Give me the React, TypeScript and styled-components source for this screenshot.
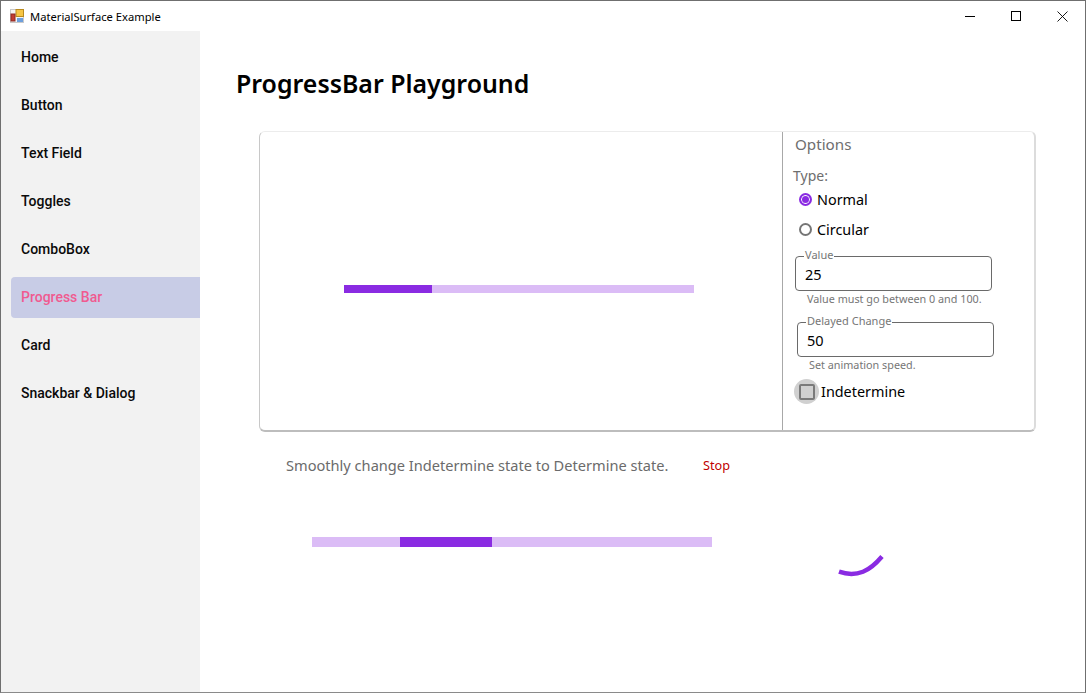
import React from 'react';
import styled, { createGlobalStyle } from 'styled-components';

const Global = createGlobalStyle`
  html, body { margin: 0; padding: 0; background: #fff; }
  body { width: 1086px; height: 693px; overflow: hidden; font-family: "Noto Sans", "Open Sans", sans-serif; }
`;

const Win = styled.div`
  width: 1086px;
  height: 693px;
  box-sizing: border-box;
  border: 1px solid #6f6f6f;
  border-bottom-color: #8a8a8a;
  display: flex;
  flex-direction: column;
  background: #fff;
  overflow: hidden;
`;

const TitleBar = styled.div`
  height: 30px;
  flex: none;
  display: flex;
  align-items: center;
  padding-left: 9px;
  gap: 6px;
  color: #000;
`;

const TitleText = styled.span`
  flex: 1;
  font-size: 11.2px;
`;

const Controls = styled.div`
  display: flex;
  align-self: flex-start;
  margin-top: 8px;
`;

const Control = styled.div`
  width: 46px;
  height: 14px;
  display: flex;
  align-items: center;
  justify-content: center;
`;

const Body = styled.div`
  flex: 1;
  display: flex;
  min-height: 0;
`;

const Sidebar = styled.nav`
  width: 199px;
  flex: none;
  background: #f2f2f2;
  padding: 6px 0 0 10px;
  box-sizing: border-box;
  display: flex;
  flex-direction: column;
  gap: 7px;
`;

const NavItem = styled.div<{ $active?: boolean }>`
  height: 41px;
  box-sizing: border-box;
  display: flex;
  align-items: center;
  padding: 0 0 2px 10px;
  font-family: Roboto, sans-serif;
  font-weight: 500;
  font-size: 14px;
  color: ${(p) => (p.$active ? '#f05a90' : '#0a0a0a')};
  background: ${(p) => (p.$active ? '#c8cce6' : 'transparent')};
  border-radius: 4px 0 0 4px;
`;

const Main = styled.main`
  flex: 1;
  padding: 33px 0 0 36px;
  min-width: 0;
`;

const Heading = styled.h1`
  margin: 0;
  font-size: 24.9px;
  line-height: 38px;
  font-weight: 600;
  color: #000;
`;

const Card = styled.section`
  margin: 29px 0 0 23px;
  width: 777px;
  height: 301px;
  box-sizing: border-box;
  background: #fff;
  border-radius: 6px;
  border: 1px solid #ececec;
  border-bottom: 2px solid #bdbdbd;
  border-right: 2px solid #dcdcdc;
  border-left: 1px solid #c8c8c8;
  display: flex;
`;

const Stage = styled.div`
  width: 523px;
  flex: none;
  display: flex;
  justify-content: center;
  align-items: center;
  box-sizing: border-box;
  padding: 16px 5px 0 0;
  border-right: 1px solid #a8a8a8;
`;

const Track = styled.div<{ $w: number; $h: number }>`
  position: relative;
  width: ${(p) => p.$w}px;
  height: ${(p) => p.$h}px;
  background: #dbbcf6;
  flex: none;
`;

const Fill = styled.div`
  position: absolute;
  top: 0;
  bottom: 0;
  background: #8a2be2;
`;

const Options = styled.div`
  flex: 1;
  display: flex;
  flex-direction: column;
  padding: 0 0 0 10px;
  color: #000;
`;

const OptionsTitle = styled.div`
  font-size: 15.2px;
  line-height: 24px;
  color: #6e6e6e;
  margin-left: 2px;
`;

const TypeLabel = styled.div`
  font-size: 14px;
  line-height: 20px;
  color: #6e6e6e;
  margin-top: 10px;
`;

const RadioGroup = styled.div`
  display: flex;
  flex-direction: column;
  margin-top: -1px;
`;

const RadioRow = styled.div`
  display: flex;
  align-items: center;
  height: 30px;
  padding: 0 0 1px 6px;
  box-sizing: border-box;
  gap: 5px;
  font-size: 14.4px;
`;

const Radio = styled.span<{ $on?: boolean }>`
  width: 13px;
  height: 13px;
  box-sizing: border-box;
  border-radius: 50%;
  border: 2px solid ${(p) => (p.$on ? '#8a2be2' : '#767676')};
  background: ${(p) => (p.$on ? '#8a2be2' : '#fff')};
  box-shadow: ${(p) => (p.$on ? 'inset 0 0 0 1px #fff' : 'none')};
`;

const Field = styled.div<{ $shift: number; $top: number }>`
  position: relative;
  margin: ${(p) => p.$top}px 0 0 ${(p) => p.$shift}px;
  width: 197px;
  height: 35px;
  box-sizing: border-box;
  border: 1px solid #6a6a6a;
  border-radius: 4px;
  display: flex;
  align-items: center;
  padding: 1px 0 0 9px;
  font-size: 14.5px;
`;

const FieldLabel = styled.span`
  position: absolute;
  left: 8px;
  top: -9px;
  padding: 0 1px;
  background: #fff;
  font-size: 11px;
  line-height: 14px;
  color: #767676;
`;

const Help = styled.div<{ $shift: number }>`
  margin-left: ${(p) => p.$shift}px;
  font-size: 10.8px;
  line-height: 15px;
  color: #767676;
`;

const CheckRow = styled.div`
  display: flex;
  align-items: center;
  margin: 7px 0 0 1px;
  gap: 2px;
  font-size: 14.4px;
`;

const CheckHalo = styled.span`
  width: 25px;
  height: 25px;
  border-radius: 50%;
  background: #d0d0d0;
  display: flex;
  align-items: center;
  justify-content: center;
`;

const CheckBox = styled.span`
  width: 16px;
  height: 16px;
  box-sizing: border-box;
  border: 2px solid #7a7a7a;
  border-radius: 2px;
`;

const Note = styled.div`
  display: flex;
  align-items: center;
  margin: 23px 0 0 50px;
  height: 20px;
`;

const NoteText = styled.span`
  width: 417px;
  font-size: 14.6px;
  color: #6b6b6b;
`;

const StopLink = styled.span`
  font-size: 12.7px;
  color: #c00000;
`;

const Demo = styled.div`
  display: flex;
  margin: 62px 0 0 76px;
`;

const Spinner = styled.svg`
  display: block;
  margin: 8px 0 0 120px;
`;

const items = ['Home', 'Button', 'Text Field', 'Toggles', 'ComboBox', 'Progress Bar', 'Card', 'Snackbar & Dialog'];

export default function App() {
  return (
    <Win>
      <Global />
      <TitleBar>
        <svg width="14" height="14" viewBox="0 0 14 14">
          <rect x="0.5" y="0.5" width="13" height="13" fill="#f4f4f4" stroke="#c9c9c9" />
          <rect x="6" y="0.5" width="7.5" height="7" fill="#f6c544" stroke="#b98a1e" />
          <rect x="1" y="5" width="4" height="7" fill="#c23b30" stroke="#8d2a22" />
          <rect x="7" y="9" width="6" height="4" fill="#6d9fdc" />
        </svg>
        <TitleText>MaterialSurface Example</TitleText>
        <Controls>
          <Control>
            <svg width="11" height="11" viewBox="0 0 11 11"><path d="M0 5.5h10" stroke="#000" fill="none" /></svg>
          </Control>
          <Control>
            <svg width="11" height="11" viewBox="0 0 11 11"><rect x="0.5" y="0.5" width="9" height="9" stroke="#000" fill="none" /></svg>
          </Control>
          <Control>
            <svg width="11" height="11" viewBox="0 0 11 11"><path d="M0.5 0.5l10 10M10.5 0.5l-10 10" stroke="#000" fill="none" strokeWidth="0.9" /></svg>
          </Control>
        </Controls>
      </TitleBar>
      <Body>
        <Sidebar>
          {items.map((item) => (
            <NavItem key={item} $active={item === 'Progress Bar'}>{item}</NavItem>
          ))}
        </Sidebar>
        <Main>
          <Heading>ProgressBar Playground</Heading>
          <Card>
            <Stage>
              <Track $w={350} $h={8}>
                <Fill style={{ left: 0, width: 88 }} />
              </Track>
            </Stage>
            <Options>
              <OptionsTitle>Options</OptionsTitle>
              <TypeLabel>Type:</TypeLabel>
              <RadioGroup>
                <RadioRow><Radio $on />Normal</RadioRow>
                <RadioRow><Radio />Circular</RadioRow>
              </RadioGroup>
              <Field $shift={2} $top={11}>
                <FieldLabel>Value</FieldLabel>
                25
              </Field>
              <Help $shift={14}>Value must go between 0 and 100.</Help>
              <Field $shift={4} $top={16}>
                <FieldLabel>Delayed Change</FieldLabel>
                50
              </Field>
              <Help $shift={16}>Set animation speed.</Help>
              <CheckRow>
                <CheckHalo><CheckBox /></CheckHalo>
                Indetermine
              </CheckRow>
            </Options>
          </Card>
          <Note>
            <NoteText>Smoothly change Indetermine state to Determine state.</NoteText>
            <StopLink>Stop</StopLink>
          </Note>
          <Demo>
            <Track $w={400} $h={10}>
              <Fill style={{ left: 88, width: 92 }} />
            </Track>
            <Spinner width="56" height="36" viewBox="0 0 56 36">
              <path d="M7 26.7 C15 29.5 24 29.5 31 26.7 C38 24 44.5 18 50 11.5" fill="none" stroke="#8a2be2" strokeWidth="4.4" />
            </Spinner>
          </Demo>
        </Main>
      </Body>
    </Win>
  );
}
